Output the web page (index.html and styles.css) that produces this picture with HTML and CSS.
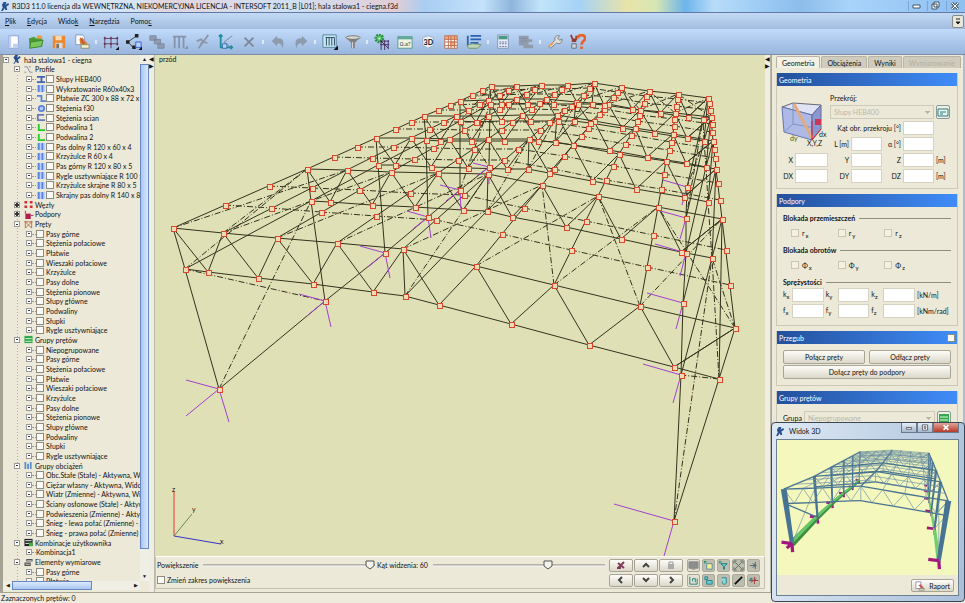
FILE: index.html
```html
<!DOCTYPE html>
<html lang="pl">
<head>
    <meta charset="UTF-8">
    <meta name="viewport" content="width=device-width, initial-scale=1.0">
    <title>R3D3 11.0</title>
    <link rel="stylesheet" href="styles.css">
</head>
<body>
<header class="titlebar">
    <svg class="logo" viewBox="0 0 10 10"><path d="M3 0h3l-1 3 3-2 1 2-3 2 1 4H5L4 7 2 10H0l2-4-1-3z" fill="#27508f"/></svg>
    <span class="title">R3D3 11.0 licencja dla WEWNĘTRZNA, NIEKOMERCYJNA LICENCJA - INTERSOFT 2011_B [L01]; hala stalowa1 - ciegna.f3d</span>
    <div class="window-buttons">
        <button aria-label="Minimalizuj"><svg viewBox="0 0 16 10"><path d="M4 4h7v3H4z" fill="#fff" stroke="#456"/></svg></button>
        <button aria-label="Przywróć"><svg viewBox="0 0 16 10"><path d="M6 1h5v5H6zM4 3h5v5H4z" fill="#fff" stroke="#456"/></svg></button>
        <button aria-label="Zamknij"><svg viewBox="0 0 16 10"><path d="M5 2l6 6m0-6L5 8" stroke="#567" stroke-width="3"/><path d="M5 2l6 6m0-6L5 8" stroke="#fff"/></svg></button>
    </div>
</header>
<nav class="menubar">
    <a href="#"><u>P</u>lik</a>
    <a href="#"><u>E</u>dycja</a>
    <a href="#">Wido<u>k</u></a>
    <a href="#"><u>N</u>arzędzia</a>
    <a href="#">Pomo<u>c</u></a>
    <button class="menu-more" aria-label="Więcej"><svg viewBox="0 0 10 10"><path d="M3 3h4M3 6h4L5 8z" stroke="#222" fill="#222"/></svg></button>
</nav>
<div class="toolbar">
    <button aria-label="Nowy"><svg viewBox="0 0 18 18"><path d="M4 2h11v14H4z" fill="#fff" stroke="#8298cf"/><path d="M4 2h3v14H4zM9 11h6v5H9z" fill="#c2cff2"/></svg></button>
    <button aria-label="Otwórz"><svg viewBox="0 0 18 18"><path d="M1 5l6-2 2 2 7-1v10L2 16z" fill="#4b9a35"/><path d="M3 9l14-2-2 7L2 16z" fill="#7bc65d" stroke="#3b842b"/><path d="M9 4c2-3 4-3 5-2l1-1 1 5-5-1 1-1z" fill="#f09a35"/></svg></button>
    <button aria-label="Zapisz"><svg viewBox="0 0 18 18"><path d="M2 2h14v14H2z" fill="#e98b2c"/><path d="M5 2h7v5H5z" fill="#f6d9b5"/><path d="M5 10h8v6H5z" fill="#d4dce9"/><path d="M6 11h3v5H6z" fill="#8b6b5a"/></svg></button>
    <button aria-label="Raport"><svg viewBox="0 0 18 18"><path d="M2 1h8l2 3v8H2z" fill="#fff" stroke="#8390b8"/><path d="M6 6l4-2 2 4 3 2-2 3-6-2z" fill="#d47b31"/><path d="M7 4l4 7" stroke="#b33"/><path d="M8 12h9v4H8z" fill="#f3efcc" stroke="#886"/></svg></button>
    <i class="sep"></i>
    <button aria-label="Siatka"><svg viewBox="0 0 18 18"><path d="M2 3v13M9 3v13M16 3v10M1 5h16M1 11h16" stroke="#5b355e" fill="none"/><path d="M1 4h2v2H1zM8 4h2v2H8zM15 4h2v2h-2zM1 10h2v2H1zM8 10h2v2H8zM15 10h2v2h-2z" fill="#73304c"/><path d="M18 14v4h-4z" fill="#111"/></svg></button>
    <button aria-label="Węzły"><svg viewBox="0 0 18 18"><path d="M12 2L2 9l7 7" stroke="#333"/><path d="M10 0h4v4h-4zM0 7h4v4H0zM7 13h4v4H7z" fill="#222"/><path d="M11 9h6v6h-6z" fill="#b7d5ff" stroke="#35c"/><path d="M18 14v4h-4z" fill="#111"/></svg></button>
    <button aria-label="Kopiuj"><svg viewBox="0 0 18 18"><path d="M1 2h7v5H1zM6 6h7v5H6zM10 11h7v5h-7z" fill="#8e9bb0" stroke="#7b879c"/></svg></button>
    <button aria-label="Podział"><svg viewBox="0 0 18 18"><path d="M1 3h15M3 3v13M8 3v13M13 3v13" stroke="#8592a9" stroke-width="2"/><path d="M18 13v4h-4z" fill="#8592a9"/></svg></button>
    <button aria-label="Przetnij"><svg viewBox="0 0 18 18"><path d="M15 1L4 16M2 8l5-2 2 3 5 1M6 12l4-5" stroke="#8c96a5" stroke-width="2" fill="none"/></svg></button>
    <button aria-label="Układ"><svg viewBox="0 0 18 18"><path d="M3 1v14h13M1 3l2-2 2 2M14 13l2 2-2 2" stroke="#1c8f9b" fill="none" stroke-width="2"/><path d="M16 2L7 9l8 7" stroke="#777e8d" fill="none"/><path d="M5 11h5v5H5z" fill="#acd6ff" stroke="#36a"/></svg></button>
    <button aria-label="Usuń"><svg viewBox="0 0 18 18"><path d="M4 4l10 10M14 4L4 14" stroke="#7e8797" stroke-width="2"/></svg></button>
    <i class="sep"></i>
    <button aria-label="Cofnij"><svg viewBox="0 0 18 18"><path d="M2 8l6-6v3c6-1 9 3 6 11-1-5-3-6-6-5v3z" fill="#8e9bad"/></svg></button>
    <button aria-label="Ponów"><svg viewBox="0 0 18 18"><path d="M16 8l-6-6v3C4 4 1 8 4 16c1-5 3-6 6-5v3z" fill="#8e9bad"/></svg></button>
    <i class="sep"></i>
    <button aria-label="Profile"><svg viewBox="0 0 18 18"><path d="M1 1h15v14H1z" fill="#c6e8ef" stroke="#507f98"/><path d="M4 4h10M5 4v9M8 4v9M11 4v9M14 4v9" stroke="#263d5f"/><path d="M18 13v5h-5z" fill="#111"/></svg></button>
    <button aria-label="Filtr"><svg viewBox="0 0 18 18"><path d="M1 4l6 6v6h4v-6l6-6z" fill="#80807e"/><ellipse cx="9" cy="4" rx="8" ry="2" fill="#d7d7d3" stroke="#73736f"/><path d="M8 9h1v7H8z" fill="#ddd"/></svg></button>
    <i class="sep"></i>
    <button aria-label="Obliczenia"><svg viewBox="0 0 18 18"><circle cx="6" cy="5" r="4" fill="#5cc873" stroke="#2b9144" stroke-dasharray="2 1" stroke-width="3"/><circle cx="6" cy="5" r="1" fill="#fff"/><path d="M7 8h10M7 12h10M8 7v11M12 7v11M16 7v10M8 8l8 8" stroke="#432455"/></svg></button>
    <button aria-label="Wyniki"><svg viewBox="0 0 18 18"><path d="M1 3h16v13H1z" fill="#eff4e1" stroke="#51958a"/><path d="M1 3h16v3H1z" fill="#61a999"/><text x="3" y="13" class="icon-text">0.a?</text></svg></button>
    <button aria-label="Widok 3D"><svg viewBox="0 0 18 18"><path d="M3 4l6-2 6 2v9l-6 3-6-3z" fill="#eef2f9" stroke="#9baac8"/><text x="4" y="12" class="icon-text icon-3d">3D</text></svg></button>
    <button aria-label="Tablica"><svg viewBox="0 0 18 18"><path d="M2 2h14v14H2z" fill="#fff"/><path d="M2 2h14v4H2zM8 8h6v6H8z" fill="#f3b07a"/><path d="M2 2h14v14H2zM2 6h14M2 9h14M2 13h14M6 2v14M9 2v14M13 2v14" stroke="#bb674c" fill="none"/></svg></button>
    <button aria-label="Lista"><svg viewBox="0 0 18 18"><path d="M2 2v11M5 2h12M5 6h12M5 10h9" stroke="#2b63b1" stroke-width="2"/><path d="M1 13l6-2 10 1-4 4H3z" fill="#bed8b7" stroke="#748e6a"/></svg></button>
    <i class="sep"></i>
    <button aria-label="Kalkulator"><svg viewBox="0 0 18 18"><path d="M3 1h12v15H3z" fill="#e8edf8" stroke="#8291b3"/><path d="M4 2h10v4H4z" fill="#499983"/><path d="M5 9h8M5 11h8M5 14h8" stroke="#5d6799" stroke-dasharray="2 1"/></svg></button>
    <button aria-label="Wymiarowanie"><svg viewBox="0 0 18 18"><path d="M1 2h11v4h4v3h-4v3h5v4H6v-3H1z" fill="#909cac"/><path d="M3 5h7M3 8h7" stroke="#808b9b"/></svg></button>
    <i class="sep"></i>
    <button aria-label="Ustawienia"><svg viewBox="0 0 18 18"><path d="M2 14l7-7c-1-4 2-6 5-5l-2 3 2 2 3-1c0 4-3 6-6 4l-7 6z" fill="#dedede" stroke="#777"/><path d="M2 14l5-4" stroke="#e79d57" stroke-width="2"/></svg></button>
    <button aria-label="Pomoc"><svg viewBox="0 0 18 18"><path d="M1 1l2 5h4M7 2v5M2 8h5" stroke="#943d2e" stroke-width="2"/><path d="M2 11h5v5H2z" fill="#cfd3dc" stroke="#667"/><path d="M9 5c0-5 8-5 8 0 0 3-4 3-4 7M13 14v3" stroke="#e8622a" stroke-width="3"/></svg></button>
</div>

<main class="workspace">
    <aside class="tree-pane">
        <div class="tree-row">
            <ul class="tree" id="tree"></ul>
            <div class="vscroll"><button aria-label="W górę">▲</button><i class="vthumb"></i><button aria-label="W dół">▼</button></div>
        </div>
        <div class="hscroll"><button aria-label="W lewo">◀</button><i class="hthumb"></i><i class="hrest"></i><button aria-label="W prawo">▶</button></div>
    </aside>
    <div class="splitter"><span>◀</span><span>▶</span></div>
    <section class="model">
        <svg id="scene" class="scene" viewBox="155 55 608 501" role="img" aria-label="Model hali">
            <text x="158" y="62">przód</text>
            <path d="M173 536V491" stroke="#e33"/>
            <path d="M173 536l18-22" stroke="#6a8a5a"/>
            <path d="M173 536l47 8" stroke="#33c"/>
            <text x="171" y="492">z</text><text x="191" y="512">y</text><text x="219" y="544">x</text>
        </svg>
        <div class="view-bar">
            <div class="view-settings">
                <div class="sliders">
                    <label for="zoom">Powiększenie</label>
                    <input type="range" id="zoom" min="0" max="100" value="100">
                    <label for="angle">Kąt widzenia: 60</label>
                    <input type="range" id="angle" min="0" max="100" value="68">
                </div>
                <label class="range-check"><input type="checkbox">Zmień zakres powiększenia</label>
            </div>
            <div class="move-buttons">
                <button aria-label="Wyłącz"><svg viewBox="0 0 12 10"><path d="M3 8l6-6M3 3l6 5M2 8h4" stroke="#803c58" stroke-width="2"/></svg></button>
                <button aria-label="Góra"><svg viewBox="0 0 12 10"><path d="M3 7l3-3 3 3" stroke="#444" stroke-width="2" fill="none"/></svg></button>
                <button aria-label="Blokada"><svg viewBox="0 0 12 10"><path d="M3 4h6v5H3z" fill="#aaa"/><path d="M4 4V2h4v2" stroke="#999" fill="none"/></svg></button>
                <button aria-label="Lewo"><svg viewBox="0 0 12 10"><path d="M7 2L4 5l3 3" stroke="#444" stroke-width="2" fill="none"/></svg></button>
                <button aria-label="Dół"><svg viewBox="0 0 12 10"><path d="M3 3l3 3 3-3" stroke="#444" stroke-width="2" fill="none"/></svg></button>
                <button aria-label="Prawo"><svg viewBox="0 0 12 10"><path d="M5 2l3 3-3 3" stroke="#444" stroke-width="2" fill="none"/></svg></button>
            </div>
            <div class="mode-buttons">
                <button class="flat" aria-label="Ekran"><svg viewBox="0 0 12 12"><path d="M1 2h10v7H1zM4 10h4" fill="#8d8d8d" stroke="#888"/></svg></button>
                <button aria-label="Dodaj"><svg viewBox="0 0 12 12"><path d="M4 4h6v6H4z" fill="#f4f28c" stroke="#58a"/><path d="M1 2h3M2 1v3" stroke="#186"/></svg></button>
                <button aria-label="Filtruj"><svg viewBox="0 0 12 12"><path d="M3 4h7L7 7v3H6V7z" fill="#5fd3dd" stroke="#277"/><path d="M1 2h3M2 1v3" stroke="#196"/></svg></button>
                <button aria-label="Rozciągnij"><svg viewBox="0 0 12 12"><path d="M2 2l8 8M10 2l-8 8M1 4V1h3M8 1h3v3M11 8v3H8M4 11H1V8" stroke="#5d7063" fill="none"/></svg></button>
                <button aria-label="Przesuń"><svg viewBox="0 0 12 12"><path d="M2 6h7M8 2v8M5 4l4 2-4 2" stroke="#567" fill="none"/></svg></button>
                <button class="flat" aria-label="Okno"><svg viewBox="0 0 12 12"><path d="M2 2v8h8V4M5 7V4h3v4" stroke="#177d75" fill="none"/></svg></button>
                <button aria-label="Warstwy"><svg viewBox="0 0 12 12"><path d="M2 2h3v3H2zM4 6h6v4H4z" fill="#66cbd2" stroke="#26818b"/></svg></button>
                <button aria-label="Obrót"><svg viewBox="0 0 12 12"><path d="M4 3h5v6c-2 2-5 1-4-2" stroke="#26818b" fill="#88dbd8"/></svg></button>
                <button aria-label="Pręt"><svg viewBox="0 0 12 12"><path d="M2 10l8-8" stroke="#111" stroke-width="2"/></svg></button>
                <button aria-label="Osie"><svg viewBox="0 0 12 12"><path d="M1 6h10M7 2v8M3 8l6-4" stroke="#a33"/><path d="M2 3h3v3H2z" fill="#478d8b"/></svg></button>
            </div>
        </div>
    </section>
    <div class="splitter"><span>◀</span><span>▶</span></div>
    <aside class="props">
        <div class="tabs">
            <button class="tab active">Geometria</button>
            <button class="tab">Obciążenia</button>
            <button class="tab">Wyniki</button>
            <button class="tab" disabled>Wymiarowanie</button>
        </div>
        <section class="group">
            <h2>Geometria</h2>
            <div class="geometry">
                <svg class="cube" viewBox="0 0 48 48">
                    <path d="M3 9l11-4 28 2-9 10z" fill="#dfe4f5" stroke="#667"/>
                    <path d="M3 9l30 8v25L5 34z" fill="#aeb9e5" stroke="#6476ae"/>
                    <path d="M33 17l9-10v24l-9 11z" fill="#8b98cf" stroke="#5f6b9e"/>
                    <path d="M14 5v21l28 5M14 26L5 34" stroke="#8292c3" fill="none"/>
                    <path d="M15 6l18 34" stroke="#e3aa82" stroke-width="3"/>
                    <path d="M33 42V23M33 42l9-11" stroke="#d23"/>
                    <path d="M36 21h6v6h-6z" fill="#c9365a"/>
                    <text x="11" y="43" class="dy">dy</text><text x="40" y="39">dx</text><text x="28" y="48">X,Y,Z</text>
                </svg>
                <label class="profile-label" for="profile">Przekrój:</label>
                <select class="profile" id="profile" disabled><option>Słupy HEB400</option></select>
                <button class="pick" aria-label="Wybierz"><svg viewBox="0 0 12 12"><path d="M1 3h10v7H1z" fill="#e9f5ee" stroke="#2d7a7c"/><path d="M3 6h6M3 8h3" stroke="#2d7a7c"/></svg></button>
                <label class="angle-label" for="rot">Kąt obr. przekroju [°]</label><input class="rot" id="rot">
                <label class="len-label" for="len">L [m]</label><input id="len"><label for="alfa">α [°]</label><input id="alfa"><span></span>
                <label for="x">X</label><input id="x"><label for="y">Y</label><input id="y"><label for="z">Z</label><input id="z"><span>[m]</span>
                <label for="dx">DX</label><input id="dx"><label for="dy">DY</label><input id="dy"><label for="dz">DZ</label><input id="dz"><span>[m]</span>
            </div>
        </section>
        <section class="group">
            <h2>Podpory</h2>
            <div class="supports">
                <h3>Blokada przemieszczeń</h3>
                <div class="checks">
                    <label><input type="checkbox" disabled>r<sub>x</sub></label>
                    <label><input type="checkbox" disabled>r<sub>y</sub></label>
                    <label><input type="checkbox" disabled>r<sub>z</sub></label>
                </div>
                <h3>Blokada obrotów</h3>
                <div class="checks">
                    <label><input type="checkbox" disabled>Φ<sub>x</sub></label>
                    <label><input type="checkbox" disabled>Φ<sub>y</sub></label>
                    <label><input type="checkbox" disabled>Φ<sub>z</sub></label>
                </div>
                <h3>Sprężystości</h3>
                <div class="springs">
                    <label for="kx">k<sub>x</sub></label><input id="kx"><label for="ky">k<sub>y</sub></label><input id="ky"><label for="kz">k<sub>z</sub></label><input id="kz"><span>[kN/m]</span>
                    <label for="fx">f<sub>x</sub></label><input id="fx"><label for="fy">f<sub>y</sub></label><input id="fy"><label for="fz">f<sub>z</sub></label><input id="fz"><span>[kNm/rad]</span>
                </div>
            </div>
        </section>
        <section class="group">
            <h2>Przegub<input type="checkbox" aria-label="Przegub"></h2>
            <div class="hinge">
                <button>Połącz pręty</button>
                <button>Odłącz pręty</button>
                <button class="wide">Dołącz pręty do podpory</button>
            </div>
        </section>
        <section class="group">
            <h2>Grupy prętów</h2>
            <div class="bar-groups">
                <label for="group">Grupa</label>
                <select id="group" disabled><option>Niepogrupowane</option></select>
                <button class="pick" aria-label="Grupy"><svg viewBox="0 0 12 12"><path d="M1 2h10v9H1z" fill="#39a852"/><path d="M2 5h8M2 8h8" stroke="#cfc"/></svg></button>
            </div>
        </section>
    </aside>
</main>
<footer class="status">Zaznaczonych prętów: 0</footer>

<div class="view3d">
    <div class="view3d-title">
        <svg class="logo" viewBox="0 0 10 10"><path d="M3 0h3l-1 3 3-2 1 2-3 2 1 4H5L4 7 2 10H0l2-4-1-3z" fill="#27508f"/></svg>
        <span>Widok 3D</span>
        <div class="view3d-buttons">
            <button aria-label="Minimalizuj"><svg viewBox="0 0 16 10"><path d="M5 5h6v2H5z" fill="#fff" stroke="#556"/></svg></button>
            <button aria-label="Maksymalizuj"><svg viewBox="0 0 16 10"><path d="M5 2h6v6H5zM7 4h2v2H7z" fill="#fff" stroke="#556"/></svg></button>
            <button class="close" aria-label="Zamknij"><svg viewBox="0 0 20 10"><path d="M7 2l6 6m0-6L7 8" stroke="#fff" stroke-width="2"/></svg></button>
        </div>
    </div>
    <div class="view3d-body">
        <svg id="preview" class="preview" viewBox="25 72 551 412" role="img" aria-label="Widok 3D"></svg>
        <div class="view3d-footer">
            <button><svg viewBox="0 0 12 12"><path d="M1 1h6v8H1z" fill="#fff" stroke="#88a"/><path d="M4 5l3-1 4 5-2 1z" fill="#c55"/><path d="M5 9h6v2H5z" fill="#eec" stroke="#887"/></svg>Raport</button>
        </div>
    </div>
</div>

<script>
    const members = ['Pasy górne', 'Stężenia połaciowe', 'Płatwie', 'Wieszaki połaciowe', 'Krzyżulce', 'Pasy dolne',
        'Stężenia pionowe', 'Słupy główne', 'Podwaliny', 'Słupki', 'Rygle usztywniające'];
    const tree = [
        ['Profile', 'profile', [
            ['Słupy HEB400', 'ibeam'], ['Wykratowanie R60x40x3', 'tube'], ['Płatwie ZC 300 x 88 x 72 x 25', 'zbeam'],
            ['Stężenia f30', 'round'], ['Stężenia scian', 'cbeam'], ['Podwalina 1', 'angle'], ['Podwalina 2', 'angle'],
            ['Pas dolny R 120 x 60 x 4', 'tube'], ['Krzyżulce R 60 x 4', 'tube'], ['Pas górny R 120 x 80 x 5', 'tube'],
            ['Rygle usztywniające R 100 x 60', 'tube'], ['Krzyżulce skrajne R 80 x 5', 'tube'], ['Skrajny pas dolny R 140 x 80', 'tube']]],
        ['Węzły', 'nodes', []],
        ['Podpory', 'support', []],
        ['Pręty', 'bars', members.map(m => [m])],
        ['Grupy prętów', 'green', ['Niepogrupowane', ...members].map(m => [m])],
        ['Grupy obciążeń', 'loads', ['Obc.Stałe (Stałe) - Aktywna, Widoczna', 'Ciężar własny - Aktywna, Widoczna',
            'Wiatr (Zmienne) - Aktywna, Widoczna', 'Ściany osłonowe (Stałe) - Aktywna', 'Podwieszenia (Zmienne) - Aktywna',
            'Śnieg - lewa połać (Zmienne) - Aktywna', 'Śnieg - prawa połać (Zmienne) - Aktywna'].map(m => [m])],
        ['Kombinacje użytkownika', 'combo', [['Kombinacja1', 'none']]],
        ['Elementy wymiarowe', 'elements', [['Pasy górne'], ['Płatwie']]]
    ];
    const icons = {
        ibeam: '<path d="M1 2h9M1 8h9M6 2v6" stroke="#4262b6" stroke-width="2"/>',
        tube: '<path d="M1 1h9v8H1z" fill="#bcd0ff"/><path d="M3 1v8M7 1v8" stroke="#5b82dc" stroke-width="2"/>',
        zbeam: '<path d="M1 2h5v6h5" stroke="#5b82dc" fill="none" stroke-width="2"/>',
        round: '<circle cx="6" cy="5" r="4" fill="#5b82dc"/><circle cx="6" cy="5" r="2" fill="#bcd0ff"/>',
        cbeam: '<path d="M9 2H2v6h8" stroke="#6a78b4" fill="none" stroke-width="2"/>',
        angle: '<path d="M3 1v7h7" stroke="#2c2" fill="none" stroke-width="2"/>',
        profile: '<path d="M1 2h3l3 6h3" stroke="#7a88b8" fill="none"/><path d="M6 2h2M1 8h2" stroke="#888"/>',
        nodes: '<path d="M1 1h3v3H1zM7 1h3v3H7zM1 6h3v3H1zM7 6h3v3H7z" fill="#c33"/>',
        support: '<path d="M2 4h6v6H2z" fill="#b0204c"/><path d="M2 1v3M8 6h3" stroke="#b0204c"/>',
        bars: '<path d="M1 2h9M2 1v8M9 1v8M2 9l7-7M2 2l7 7" stroke="#b86a40"/>',
        green: '<path d="M1 1h9v8H1z" fill="#2fa84c"/><path d="M2 4h7M2 7h7" stroke="#d5f5d5"/>',
        loads: '<path d="M2 1v8M5 3v6M8 1v8" stroke="#5f8fd0" stroke-width="2"/>',
        combo: '<path d="M1 1h9v8H1z" fill="#222"/><path d="M2 3h7M2 6h4" stroke="#fff"/><path d="M6 5h4v4H6z" fill="#3b3"/>',
        elements: '<path d="M3 1h7v3H3zM1 5h7v4H1z" fill="#555"/><path d="M2 7h5M4 3h5" stroke="#ccc"/>',
        logo: '<path d="M3 0h3l-1 3 3-2 1 2-3 2 1 4H5L4 7 2 10H1l2-4-2-3z" fill="#27508f"/>'
    };
    const icon = name => icons[name] ? `<svg viewBox="0 0 11 10">${icons[name]}</svg>` : '';

    function renderTree() {
        let html = `<li class="root"><b class="minus"></b>${icon('logo')}hala stalowa1 - ciegna</li>`;
        tree.forEach(([name, iconName, items]) => {
            html += `<li class="branch"><b class="${items.length ? 'minus' : 'plus'}"></b>${icon(iconName)}${name}</li>`;
            items.forEach(([text, itemIcon]) => {
                const box = itemIcon === 'none' ? '' : '<input type="checkbox">';
                html += `<li class="leaf"><b class="minus"></b><label>${icon(itemIcon)}${box}${text}</label></li>`;
            });
        });
        document.getElementById('tree').innerHTML = html;
    }

    // top: 9 węzłów pasa górnego, bottom: 11 węzłów pasa dolnego
    const frames = [
        { top: [[172,228],[222,233],[276,238],[336,243],[402,249],[475,266],[553,285],[639,306],[734,328]],
          bottom: [[184,269],[207,272],[257,278],[312,284],[372,292],[404,296],[438,305],[510,324],[588,345],[673,367],[718,379]],
          feet: [[218,389],[673,521]] },
        { top: [[306,169],[346,170],[390,172],[437,173],[487,174],[541,185],[597,196],[657,207],[721,219]],
          bottom: [[310,201],[329,202],[371,205],[414,207],[462,210],[486,211],[511,217],[565,227],[620,239],[680,252],[711,258]],
          feet: [[324,301],[680,375]] },
        { top: [[375,138],[410,138],[448,139],[487,139],[528,139],[572,145],[618,154],[665,161],[715,169]],
          bottom: [[377,165],[394,165],[430,167],[467,168],[506,169],[527,169],[548,173],[591,181],[635,189],[683,197],[707,202]],
          feet: [[384,253],[682,303]] },
        { top: [[423,116],[455,116],[487,116],[521,115],[556,115],[593,121],[634,128],[672,134],[712,141]],
          bottom: [[425,140],[439,141],[470,141],[503,141],[537,141],[554,142],[572,145],[608,150],[646,157],[685,163],[705,167]],
          feet: [[427,217],[685,253]] },
        { top: [[459,101],[487,100],[515,99],[545,99],[575,102],[607,104],[639,110],[674,113],[710,117]],
          bottom: [[459,121],[475,122],[500,121],[529,121],[557,121],[573,121],[589,123],[621,128],[653,133],[686,138],[703,141]],
          feet: [[459,190],[685,218]] },
        { top: [[490,86],[515,86],[540,85],[566,85],[593,83],[620,87],[648,91],[677,94],[707,98]],
          bottom: [[489,104],[500,104],[526,104],[552,104],[577,104],[591,104],[603,105],[631,109],[659,113],[687,117],[702,119]],
          feet: [[488,167],[686,187]] }
    ];

    const line = (a, b, cls) => `<line class="${cls}" x1="${a[0]}" y1="${a[1]}" x2="${b[0]}" y2="${b[1]}"/>`;
    const mix = (a, b, t) => [Math.round(a[0] + (b[0] - a[0]) * t), Math.round(a[1] + (b[1] - a[1]) * t)];

    // pasy i krzyżulce jednej ramy
    function truss(f, chord, web) {
        let out = '';
        for (let i = 0; i < 8; i++) out += line(f.top[i], f.top[i + 1], chord);
        for (let i = 0; i < 10; i++) out += line(f.bottom[i], f.bottom[i + 1], chord);
        out += line(f.top[0], f.bottom[0], web) + line(f.top[4], f.bottom[5], web) + line(f.top[8], f.bottom[10], web);
        for (let i = 0; i < 8; i++) {
            const b = f.bottom[i < 4 ? i + 1 : i + 2];
            out += line(f.top[i], b, web) + line(b, f.top[i + 1], web);
        }
        return out + line(f.top[8], f.bottom[9], web);
    }

    function drawScene() {
        let lines = '', marks = '', axes = '';
        const node = p => `<rect class="node" x="${p[0] - 2}" y="${p[1] - 2}" width="5" height="5"/>`;
        frames.forEach((f, n) => {
            lines += truss(f, 'bar', 'bar');
            lines += line(f.bottom[0], f.feet[0], 'bar') + line(f.bottom[10], f.feet[1], 'bar');
            f.top.concat(f.bottom, f.feet).forEach(p => marks += node(p));
            const s = [1, .8, .75, .65, .6, .5][n];
            const [l, r] = f.feet;
            axes += line(l, mix(l, [l[0] - 33, l[1] - 9], s), 'axis') + line(l, mix(l, [l[0] + 10 - n * 2, l[1] + 33], s), 'axis') + line(l, mix(l, [l[0] - 33, l[1] + 27], n ? s * .7 : 1), 'axis');
            axes += line(r, mix(r, [r[0] - 60, r[1] - 17], n ? s * .8 : 1), 'axis') + line(r, mix(r, [r[0] - 10, r[1] + 35], s), 'axis');
            const g = frames[n + 1];
            if (!g) return;
            const rows = [[], []];
            f.top.forEach((p, i) => {
                lines += line(p, g.top[i], 'bar');
                [.39, .72].forEach((t, k) => {
                    const q = mix(p, g.top[i], t);
                    rows[k].push(q);
                    marks += node(q);
                });
            });
            rows.forEach(r => { for (let i = 0; i < 8; i++) lines += line(r[i], r[i + 1], 'brace'); });
            lines += line(f.bottom[0], g.bottom[0], 'bar') + line(f.bottom[10], g.bottom[10], 'brace') + line(f.bottom[5], g.bottom[5], 'bar');
            lines += line(f.feet[0], g.feet[0], 'bar') + line(f.feet[1], g.feet[1], 'bar');
            // stężenia połaciowe w skrajnych polach
            if (n === 0 || n === 4) {
                for (let i = 0; i < 8; i++) lines += line(f.top[i], g.top[i + 1], 'brace');
                lines += line(f.top[1], g.top[0], 'brace') + line(f.top[8], g.top[7], 'brace');
                lines += line(f.feet[0], g.bottom[0], 'brace') + line(f.bottom[0], g.feet[0], 'brace');
                lines += line(f.feet[1], g.bottom[10], 'brace') + line(f.bottom[10], g.feet[1], 'brace');
                lines += line(f.bottom[0], g.top[0], 'brace') + line(f.top[8], g.bottom[10], 'brace');
                lines += line(f.top[7], g.top[6], 'brace') + line(f.top[6], g.top[5], 'brace');
            }
            lines += line(f.bottom[5], g.top[4], 'brace') + line(f.bottom[10], g.top[8], 'bar');
        });
        document.getElementById('scene').insertAdjacentHTML('beforeend', lines + axes + marks);
    }

    // widok 3D: lewy okap, kalenica, prawy okap, stopy, wysokość kratownicy
    const previewFrames = [
        [[45,222],[280,213],[547,258],[70,388],[518,440],44],
        [[138,183],[325,168],[524,200],[148,308],[505,343],32],
        [[190,155],[348,142],[510,165],[193,265],[495,290],25],
        [[228,135],[360,125],[500,140],[228,235],[488,252],20],
        [[255,120],[370,113],[493,125],[255,215],[486,230],17],
        [[278,108],[375,103],[488,112],[275,195],[484,212],14]
    ];

    function drawPreview() {
        let out = '';
        const poly = (pts, fill) => `<polygon points="${pts.map(p => p.join()).join(' ')}" fill="${fill}"/>`;
        const built = previewFrames.map(([l, m, r, fl, fr, h]) => {
            const top = [], bottom = [];
            for (let i = 0; i <= 8; i++) top.push(i < 4 ? mix(l, m, i / 4) : mix(m, r, (i - 4) / 4));
            const lb = [l[0] + 4, l[1] + h], mb = [m[0], m[1] + h], rb = [r[0] - 6, r[1] + h];
            [0, .12, .37, .62, .87, 1].forEach(t => bottom.push(mix(lb, mb, t)));
            [.13, .38, .63, .88, 1].forEach(t => bottom.push(mix(mb, rb, t)));
            return { top, bottom, feet: [fl, fr], h };
        });
        for (let n = 5; n >= 0; n--) {
            const f = built[n], g = built[n + 1];
            if (g) {
                f.top.forEach((p, i) => out += line(p, g.top[i], i % 4 ? 'thin' : 'steel'));
                [.39, .72].forEach(t => {
                    out += line(mix(f.top[0], g.top[0], t), mix(f.top[4], g.top[4], t), 'thin');
                    out += line(mix(f.top[4], g.top[4], t), mix(f.top[8], g.top[8], t), 'thin');
                });
                [0, 1].forEach(k => {
                    const a = f.feet[k], b = g.feet[k], w = f.h / 6, v = g.h / 6;
                    out += poly([[a[0] - w, a[1] - w], [a[0] + w, a[1] + w], [b[0] + v, b[1] + v], [b[0] - v, b[1] - v]], k ? '#6fce70' : '#3f8d43');
                    if (!k) out += poly([[a[0] - w, a[1] - w], [a[0] + 2, a[1]], [b[0] + 1, b[1]], [b[0] - v, b[1] - v]], '#63c967');
                });
                if (n === 0) {
                    out += line(f.bottom[0], g.feet[0], 'steel') + line(f.feet[0], g.bottom[0], 'thin');
                    out += line(f.bottom[10], g.feet[1], 'thin') + line(f.feet[1], g.bottom[10], 'thin');
                }
            }
            out += truss(f, n > 2 ? 'thin' : 'steel', 'thin');
            [[f.top[0], f.feet[0]], [f.top[8], f.feet[1]]].forEach(([t, b], k) => {
                const w = n ? f.h / 7 : 9;
                out += poly([[t[0] - w, t[1]], [t[0] + w, t[1]], [b[0] + w * .7, b[1]], [b[0] - w * .7, b[1]]], '#487493');
                const s = f.h / 44;
                out += `<path class="foot" stroke-width="${Math.round(2 + 8 * s)}" d="M${b[0]} ${b[1]}l${-32 * s} ${-4 * s}M${b[0]} ${b[1]}l${2 * s} ${26 * s}${k ? '' : `M${b[0]} ${b[1]}l${-16 * s} ${14 * s}`}"/>`;
            });
        }
        document.getElementById('preview').innerHTML = out;
    }

    renderTree();
    drawScene();
    drawPreview();
</script>
</body>
</html>
```
FILE: styles.css
```css
* {
    box-sizing: border-box;
}
body {
    margin: 0;
    height: 100vh;
    display: flex;
    flex-direction: column;
    overflow: hidden;
    font-family: Lato, "Open Sans", sans-serif;
    font-size: 7px;
    line-height: 10px;
    color: #111;
    background-color: #ece9d8;
}
button, input, select {
    font: inherit;
    color: inherit;
    margin: 0;
    padding: 0;
}
svg {
    display: block;
    fill: none;
}
a {
    color: inherit;
    text-decoration: none;
}
input[type="checkbox"] {
    appearance: none;
    flex: none;
    width: 8px;
    height: 8px;
    background-color: #fbfaf4;
    border: 1px solid #8d8d84;
}
input[type="checkbox"]:disabled {
    background-color: #f3f1e4;
    border-color: #c9c6b6;
}
.titlebar {
    display: flex;
    align-items: center;
    gap: 2px;
    height: 13px;
    padding-left: 1px;
    border-bottom: 1px solid #5f7ba6;
    background: linear-gradient(90deg, #cfe2f7 0, #d6e4f4 14%, #e3d4dc 17%, #cfe0f3 30%, #e2cdd5 41%, #a9cdf2 44%, #c4e2fb 50%, #8fb5dc 53%, #c2e4fa 56%, #a6d2f6 60%, #e9e3a8 65%, #d6e6b4 68%, #6cb4ec 71%, #b8dcf8 74%, #9ccbf5 79%, #8dbdea 83%, #a8d3fa 88%, #8fc0f2 100%);
}
.logo {
    width: 9px;
    height: 9px;
}
.window-buttons {
    display: flex;
    margin-left: auto;
}
.window-buttons button {
    width: 19px;
    height: 10px;
    background: none;
    border: none;
    border-left: 1px solid #7ea5d0;
}
.window-buttons svg {
    width: 16px;
}
.menubar {
    display: flex;
    align-items: center;
    gap: 11px;
    height: 16px;
    padding: 0 1px 0 5px;
    background: linear-gradient(#c3d9f5, #a3bde0);
}
.menu-more {
    width: 12px;
    height: 13px;
    margin-left: auto;
    background-color: #e9e7dc;
    border: 1px solid #888;
    border-radius: 2px;
}
.toolbar {
    display: flex;
    align-items: center;
    height: 26px;
    padding-left: 1px;
    background: linear-gradient(#c1dbfb, #9ab5dc);
    border-bottom: 1px solid #7c8da5;
}
.toolbar button {
    display: flex;
    justify-content: center;
    width: 23px;
    background: none;
    border: none;
}
.toolbar svg {
    width: 16px;
    height: 16px;
}
.sep {
    width: 2px;
    height: 4px;
    margin: 0 2px;
    background-color: #dbe9fb;
}
.icon-text {
    font-size: 7px;
    fill: #234;
}
.icon-3d {
    font-size: 8px;
    font-weight: bold;
    fill: #111;
}
.workspace {
    flex: 1;
    display: flex;
    min-height: 0;
}
.tree-pane {
    display: flex;
    flex-direction: column;
    flex: 0 0 149px;
    min-width: 0;
    min-height: 0;
    padding-bottom: 2px;
    border-left: 3px solid #a5a294;
}
.tree-row {
    flex: 1;
    display: flex;
    min-width: 0;
    min-height: 0;
    overflow: hidden;
}
.tree {
    flex: 1;
    display: grid;
    grid-template-columns: minmax(0, 1fr);
    grid-auto-rows: minmax(0, 1fr);
    height: 101%;
    min-width: 0;
    margin: 0;
    padding: 0;
    list-style: none;
    overflow: hidden;
    background: repeating-linear-gradient(#aaa 0 1px, transparent 1px 3px) 14px 20px / 1px 100% no-repeat;
}
.tree li, .tree label {
    display: flex;
    align-items: center;
    white-space: nowrap;
}
.tree b {
    flex: none;
    width: 6px;
    height: 6px;
    border: 1px solid #999;
    background: linear-gradient(#333, #333) center / 2px 1px no-repeat #fff;
}
.tree .plus {
    background: linear-gradient(#333, #333) center / 4px 2px no-repeat, linear-gradient(#333, #333) center / 2px 4px no-repeat #fff;
}
.tree svg {
    flex: none;
    width: 11px;
    height: 9px;
}
.root svg {
    margin: 0 1px;
}
.root b {
    margin-right: 2px;
}
.branch {
    padding-left: 11px;
}
.branch svg {
    margin: 0 1px 0 3px;
}
.leaf {
    padding-left: 23px;
}
.leaf b::after {
    content: "";
    display: block;
    width: 4px;
    margin: 2px 0 0 5px;
    border-top: 1px dotted #999;
}
.leaf label {
    margin-left: 4px;
}
.leaf input {
    margin: 0 2px 0 0;
}
.leaf svg {
    width: 10px;
}
.vscroll {
    display: flex;
    flex-direction: column;
    flex: none;
    width: 9px;
    background-color: #f0efe6;
}
.vscroll button, .hscroll button {
    height: 9px;
    width: 9px;
    font-size: 5px;
    line-height: 9px;
    background: none;
    border: none;
}
.vthumb {
    flex: 0 1 485px;
    border: 1px solid #6787c4;
    background: linear-gradient(90deg, #a9c6ef, #dae9fd);
}
.vscroll button:last-child {
    margin-top: auto;
}
.hscroll {
    display: flex;
    height: 9px;
    margin-right: 9px;
    background-color: #f0efe6;
}
.hthumb {
    flex: 2;
    border: 1px solid #6787c4;
    background: linear-gradient(#dae9fd, #a9c6ef);
}
.hrest {
    flex: 1;
}
.splitter {
    display: flex;
    flex-direction: column;
    align-items: center;
    flex: none;
    width: 6px;
    font-size: 6px;
    line-height: 7px;
    background-color: #f0eee2;
    border-right: 1px solid #bbb8a9;
}
.model {
    flex: 1;
    display: flex;
    flex-direction: column;
    min-width: 0;
}
.scene {
    flex: 1;
    min-height: 0;
    background-color: #dfe0b5;
}
.scene text {
    font-size: 7px;
    fill: #111;
}
.bar {
    stroke: #33331f;
}
.brace {
    stroke: #33331f;
    stroke-dasharray: 6 2 1 2;
}
.axis {
    stroke: #a33fd0;
}
.node {
    fill: #f0dcb4;
    stroke: #d9472f;
    shape-rendering: crispEdges;
}
.view-bar {
    display: flex;
    align-items: center;
    gap: 4px;
    height: 33px;
    margin-bottom: 3px;
    padding: 0 4px 0 1px;
    border: 1px solid #c4c1b1;
    border-top-color: #fff;
}
.view-settings {
    flex: 1;
    display: flex;
    flex-direction: column;
    gap: 5px;
}
.sliders, .range-check {
    display: flex;
    align-items: center;
    gap: 2px;
}
.sliders label:first-child {
    width: 44px;
}
.sliders label {
    width: 54px;
    white-space: nowrap;
}
input[type="range"] {
    appearance: none;
    flex: 1;
    min-width: 0;
    height: 10px;
    background: linear-gradient(#a6a396, #fff) center / 100% 3px no-repeat;
}
input[type="range"]::-webkit-slider-thumb {
    appearance: none;
    width: 10px;
    height: 10px;
    background: url("data:image/svg+xml,%3Csvg xmlns='http://www.w3.org/2000/svg' viewBox='0 0 10 10'%3E%3Cpath d='M1 1h8v5L5 9 1 6z' fill='%23f5f4ec' stroke='%23555'/%3E%3C/svg%3E");
}
.move-buttons {
    display: grid;
    grid-template-columns: repeat(3, 24px);
    gap: 2px 1px;
}
.mode-buttons {
    display: grid;
    grid-template-columns: repeat(5, 13px);
    gap: 2px;
}
.move-buttons button, .hinge button, .view3d-footer button {
    display: flex;
    align-items: center;
    justify-content: center;
    height: 13px;
    background: linear-gradient(#fdfcf8, #dbd8c9);
    border: 1px solid #a8a597;
    border-radius: 2px;
}
.move-buttons svg {
    width: 12px;
}
.mode-buttons button {
    height: 13px;
    background-color: #bdbdb0;
    border: 1px solid #aaa89a;
    border-radius: 2px;
}
.mode-buttons .flat {
    background-color: #e4e1d2;
}
.props {
    flex: 0 0 194px;
    display: flex;
    flex-direction: column;
    gap: 5px;
    padding: 1px 5px 0 4px;
    overflow: hidden;
    border-left: 1px solid #aaa798;
    border-right: 2px solid #aebdd2;
}
.tabs {
    display: flex;
    gap: 1px;
    height: 12px;
}
.tab {
    padding: 0 5px;
    background-color: #cfccbd;
    border: 1px solid #b6b3a4;
    border-bottom: none;
    border-radius: 2px 2px 0 0;
}
.tab.active {
    background-color: #f3f1e6;
}
.tab:disabled {
    color: #b3b0a2;
}
.group {
    border: 1px solid #cbc8b8;
    border-top: none;
}
.group h2 {
    display: flex;
    align-items: center;
    justify-content: space-between;
    height: 13px;
    margin: 0;
    padding: 0 2px;
    font-size: 7px;
    font-weight: normal;
    color: #fff;
    background: linear-gradient(90deg, #24509c, #3f8cf8);
}
.group input:not([type]) {
    width: 100%;
    min-width: 0;
    height: 14px;
    background-color: #fff;
    border: 1px solid #d5d2c2;
}
.group select {
    appearance: none;
    min-width: 0;
    height: 14px;
    padding-left: 3px;
    color: #b9b6a8;
    background: conic-gradient(from -45deg at 50% 100%, #b9b6a8 90deg, transparent 0) right 3px center / 5px 3px no-repeat #ece9d8;
    background: linear-gradient(#b9b6a8, #b9b6a8) right 3px top 5px / 5px 1px no-repeat, linear-gradient(#b9b6a8, #b9b6a8) right 4px top 6px / 3px 1px no-repeat, linear-gradient(#b9b6a8, #b9b6a8) right 5px top 7px / 1px 1px no-repeat #ece9d8;
    border: 1px solid #cdcaba;
    opacity: 1;
}
.geometry {
    display: grid;
    grid-template-columns: 15px 1fr 19px 1fr 17px 1fr 20px;
    grid-template-rows: 10px;
    gap: 2px;
    align-items: center;
    padding: 7px 1px 5px;
}
.geometry label {
    justify-self: end;
}
.cube {
    grid-area: 1 / 1 / 5 / 3;
    width: 50px;
    height: 48px;
    overflow: visible;
}
.cube text {
    font-size: 7px;
    fill: #222;
}
.cube .dy {
    fill: #286b28;
}
.geometry .profile-label {
    grid-area: 1 / 3 / 2 / 6;
    justify-self: start;
}
.profile {
    grid-column: 3 / 7;
}
.pick {
    width: 14px;
    height: 14px;
    background-color: #eef0e6;
    border: 1px solid #8b9a95;
    border-radius: 2px;
}
.geometry .angle-label {
    grid-area: 3 / 3 / 4 / 6;
}
.rot {
    grid-area: 3 / 6 / 4 / 7;
}
.geometry .len-label {
    grid-column: 3;
}
.supports {
    padding: 5px 6px 7px;
}
.supports h3 {
    display: flex;
    align-items: center;
    gap: 4px;
    height: 12px;
    margin: 0;
    font-size: 7px;
    font-weight: bold;
}
.supports h3::after {
    content: "";
    flex: 1;
    border-top: 1px solid #8f8c80;
}
sub {
    font-size: 6px;
    line-height: 6px;
    vertical-align: sub;
}
.checks {
    display: grid;
    grid-template-columns: 1fr 1fr 1fr 20px;
    height: 12px;
    margin: 3px 0 5px;
    padding-left: 8px;
}
.checks label {
    display: flex;
    align-items: center;
    gap: 1px;
}
.checks input {
    margin-right: 2px;
}
.checks sub {
    padding-top: 5px;
}
.springs {
    display: grid;
    grid-template-columns: 7px 1fr 10px 1fr 10px 1fr 34px;
    gap: 2px;
    align-items: center;
}
.hinge {
    display: grid;
    grid-template-columns: 1fr 1fr;
    gap: 1px 4px;
    padding: 6px;
}
.hinge button {
    height: 14px;
}
.hinge .wide {
    grid-column: 1 / 3;
}
.bar-groups {
    display: flex;
    align-items: center;
    gap: 2px;
    padding: 7px 6px;
}
.bar-groups select {
    flex: 1;
}
.status {
    height: 11px;
    padding-left: 1px;
    border-top: 1px solid #a5a294;
    background-color: #eeebdd;
}
.view3d {
    position: absolute;
    right: 0;
    bottom: 1px;
    display: flex;
    flex-direction: column;
    width: 194px;
    height: 180px;
    padding: 0 5px 5px 4px;
    border: 1px solid #3b4654;
    border-radius: 4px;
    background: linear-gradient(100deg, #dfe9f5, #a9bfda);
}
.view3d-title {
    display: flex;
    align-items: center;
    gap: 4px;
    height: 16px;
}
.view3d-buttons {
    display: flex;
    align-self: flex-start;
    margin-left: auto;
}
.view3d-buttons button {
    display: flex;
    justify-content: center;
    width: 16px;
    height: 10px;
    border: 1px solid #6c7a8e;
    border-top: none;
    background: linear-gradient(#e6edf6, #a7b8ce);
}
.view3d-buttons .close {
    width: 26px;
    background: linear-gradient(#e2a49a, #b8382a);
}
.view3d-buttons svg {
    width: 16px;
    height: 9px;
}
.view3d-body {
    flex: 1;
    display: flex;
    flex-direction: column;
    min-height: 0;
    border: 1px solid #6d8093;
    background-color: #ece9d8;
}
.preview {
    flex: 1;
    min-height: 0;
    background-color: #f4f8bd;
}
.preview .steel {
    stroke: #487493;
    stroke-width: 4;
}
.preview .thin {
    stroke: #6a8ea3;
    stroke-width: 2;
}
.foot {
    stroke: #a3177f;
}
.view3d-footer {
    display: flex;
    justify-content: flex-end;
    padding: 4px 4px 3px;
}
.view3d-footer button {
    gap: 4px;
    padding: 0 3px;
}
.view3d-footer svg {
    width: 10px;
}
```
